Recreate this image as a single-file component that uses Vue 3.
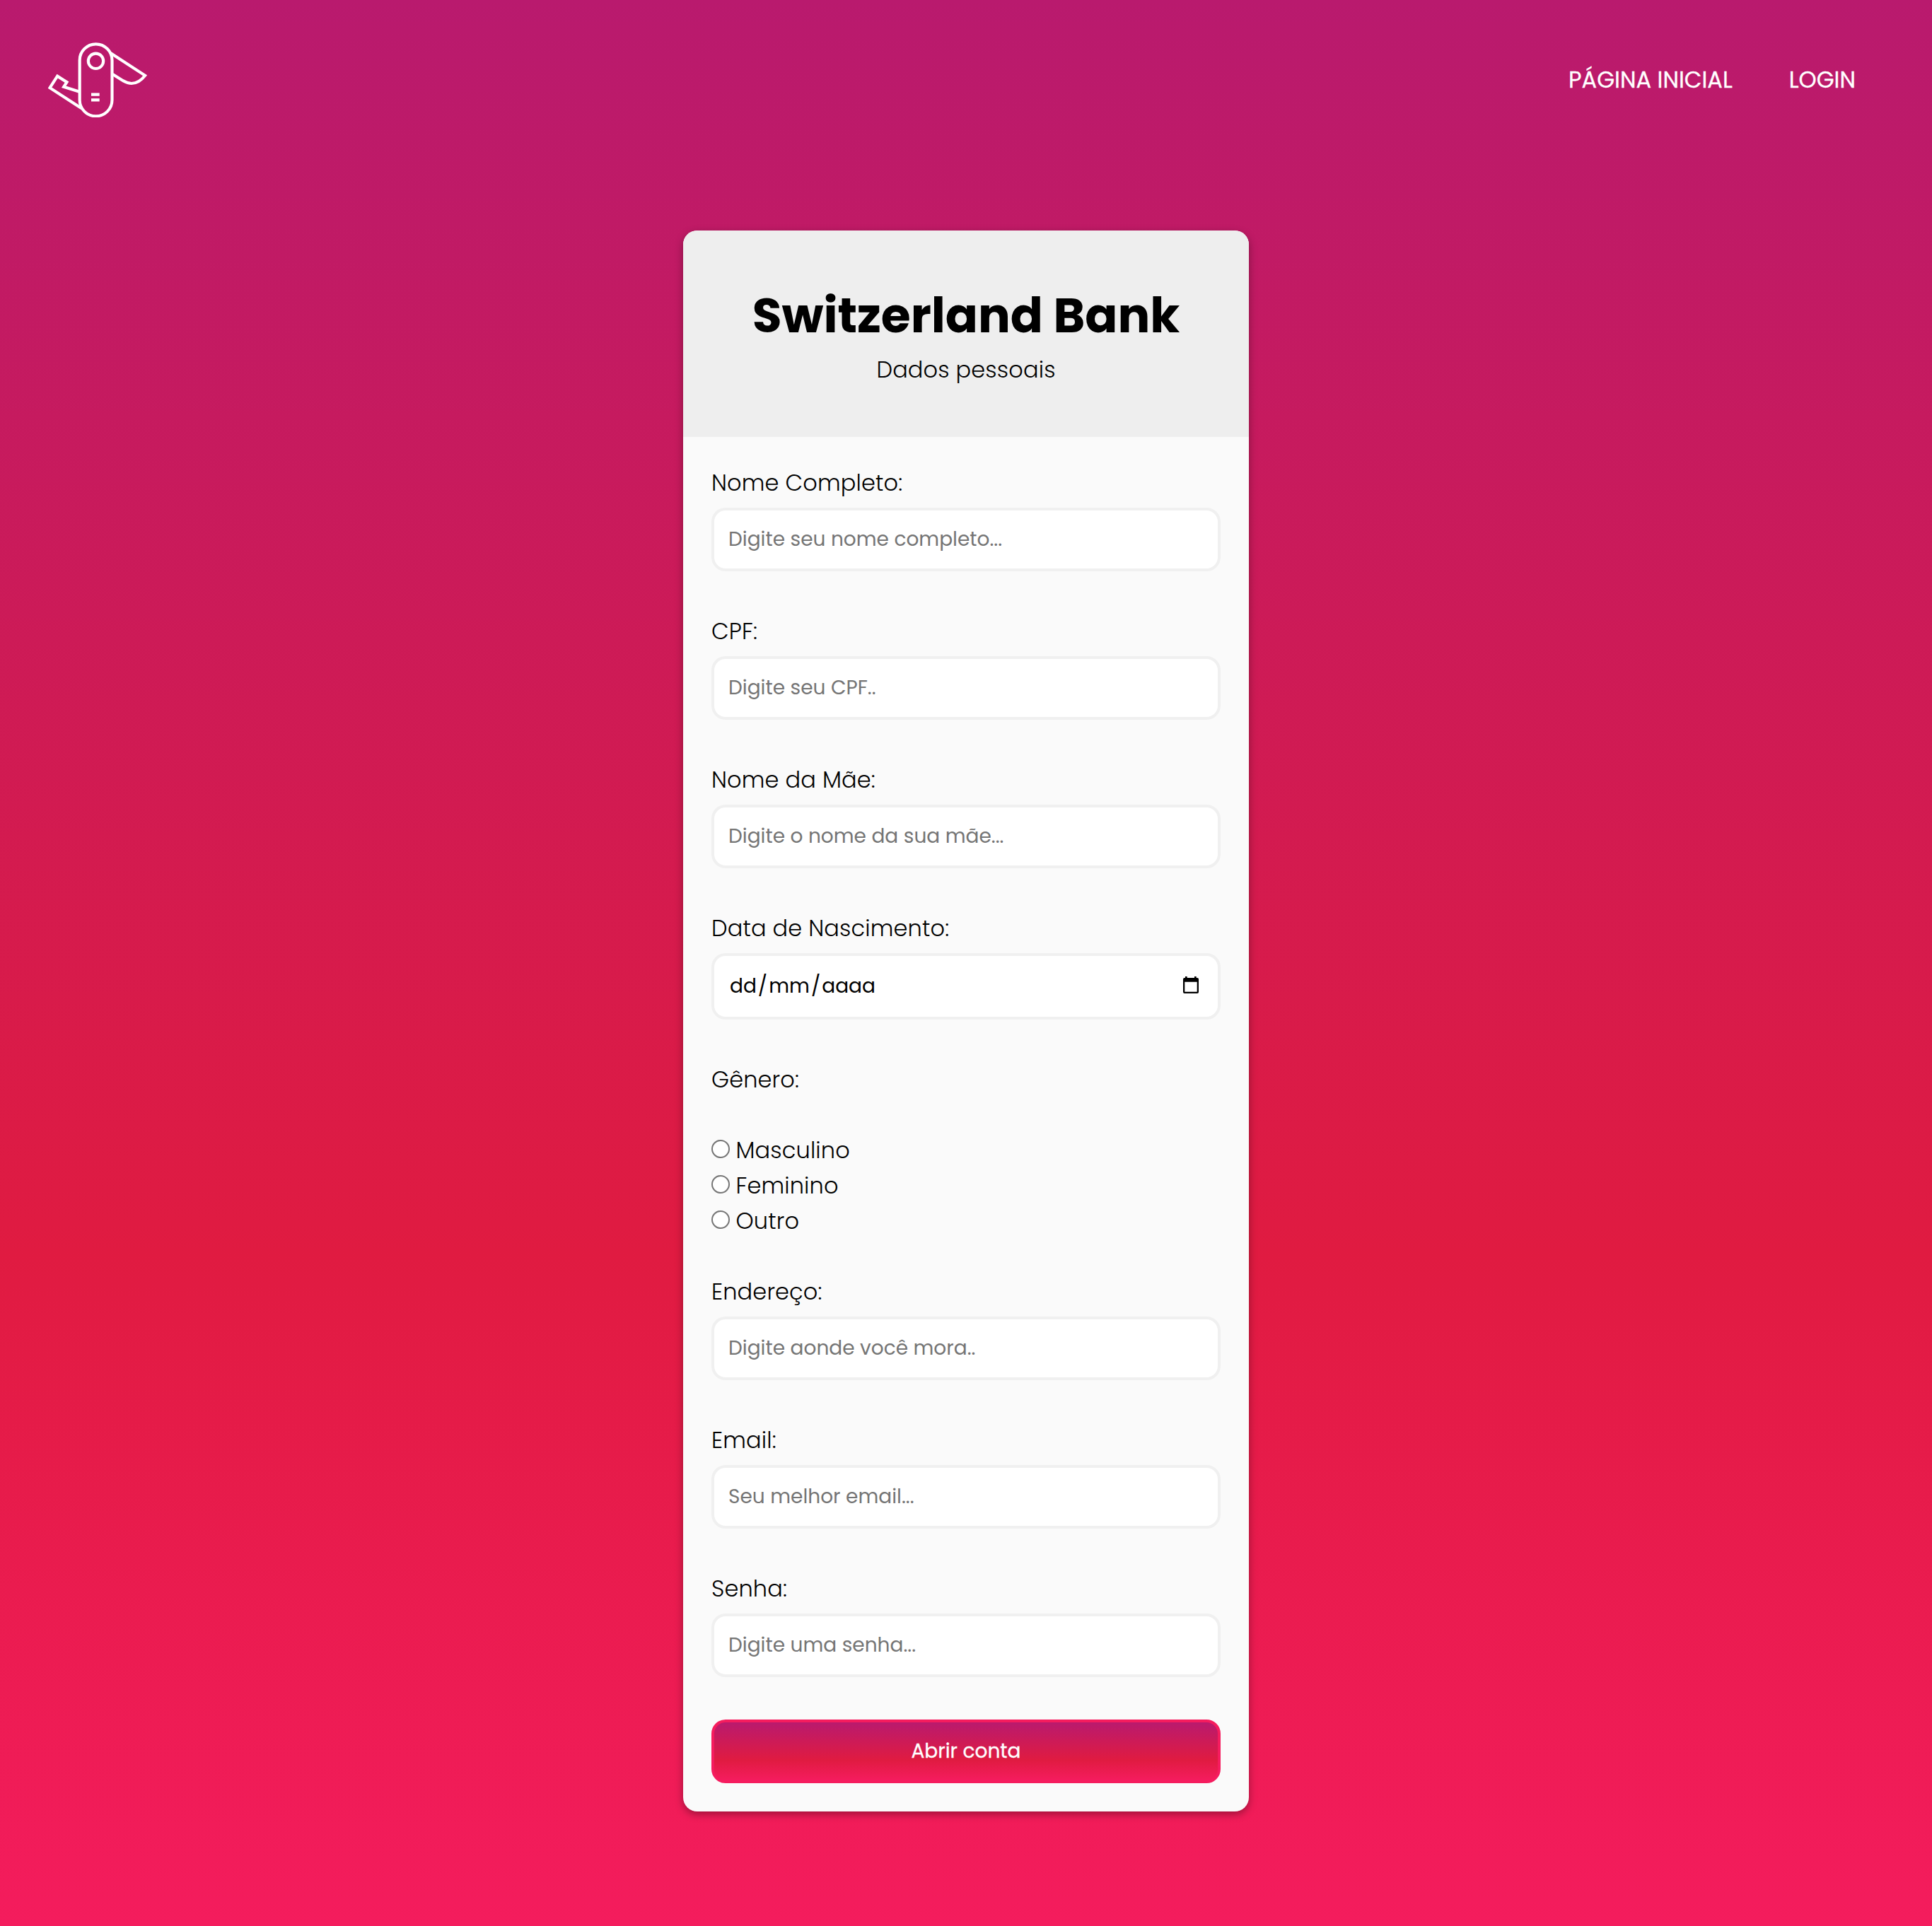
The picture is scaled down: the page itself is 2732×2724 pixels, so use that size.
<script setup>
const personal = [
  { id: 'nome', label: 'Nome Completo:', type: 'text', hint: 'Digite seu nome completo...' },
  { id: 'cpf', label: 'CPF:', type: 'text', hint: 'Digite seu CPF..' },
  { id: 'mae', label: 'Nome da Mãe:', type: 'text', hint: 'Digite o nome da sua mãe...' },
]
const genders = [
  { value: 'm', label: 'Masculino' },
  { value: 'f', label: 'Feminino' },
  { value: 'o', label: 'Outro' },
]
const account = [
  { id: 'endereco', label: 'Endereço:', type: 'text', hint: 'Digite aonde você mora..' },
  { id: 'email', label: 'Email:', type: 'email', hint: 'Seu melhor email...' },
  { id: 'senha', label: 'Senha:', type: 'password', hint: 'Digite uma senha...' },
]
</script>

<template>
  <div class="page">
    <header class="topbar">
      <svg class="logo" viewBox="54 59 420 320" fill="none" stroke="#fff" stroke-width="12.500">
        <rect x="188" y="66" width="137.500" height="306" rx="68.700" />
        <circle cx="256.500" cy="138" r="32" />
        <path d="M237 280h35M237 303h35" />
        <path d="M187 268.500L120.500 247.500L133.500 227.500L93.500 202L61.500 251.500L196 339" />
        <path d="M319 104L465.500 199.500C446 225 428 233 408 233C392 233 380 226 371 221L328 194" />
      </svg>
      <nav class="nav">
        <a>PÁGINA INICIAL</a>
        <a>LOGIN</a>
      </nav>
    </header>

    <main class="card">
      <div class="card-head">
        <h1>Switzerland Bank</h1>
        <p>Dados pessoais</p>
      </div>
      <form class="form">
        <div v-for="f in personal" :key="f.id" class="field">
          <label class="label" :for="f.id">{{ f.label }}</label>
          <input :id="f.id" class="box" :type="f.type" :placeholder="f.hint" />
        </div>

        <div class="field">
          <span class="label">Data de Nascimento:</span>
          <div class="box date">
            <div class="parts">
              <span class="part">dd</span><span>/</span><span class="part">mm</span><span>/</span><span class="part">aaaa</span>
            </div>
            <svg class="cal" viewBox="0 0 22 24">
              <path fill="#000" fill-rule="evenodd" d="M3 0h2.700v2H16V0h2.700v2H20a2 2 0 0 1 2 2V22a2 2 0 0 1-2 2H2a2 2 0 0 1-2-2V4a2 2 0 0 1 2-2H3zM2.300 7.700V21.700H19.700V7.700z" />
            </svg>
          </div>
        </div>

        <div class="genders">
          <span class="label">Gênero:</span>
          <div class="options">
            <label v-for="g in genders" :key="g.value" class="option">
              <input class="radio" type="radio" name="genero" :value="g.value" />
              <span class="label">{{ g.label }}</span>
            </label>
          </div>
        </div>

        <div v-for="f in account" :key="f.id" class="field">
          <label class="label" :for="f.id">{{ f.label }}</label>
          <input :id="f.id" class="box" :type="f.type" :placeholder="f.hint" />
        </div>

        <button class="submit" type="button">Abrir conta</button>
      </form>
    </main>
  </div>
</template>

<style>
body {
  margin: 0;
}
</style>

<style scoped>
* {
  box-sizing: border-box;
  margin: 0;
}
.page {
  min-height: 2724px;
  background: linear-gradient(to bottom, #b91a6e, #e01b41 65%, #f41c5d);
  font-family: Poppins, Inter, sans-serif;
  color: #000;
}
.topbar {
  height: 226px;
  padding: 0 108px 0 68px;
  display: flex;
  align-items: center;
  justify-content: space-between;
}
.logo {
  width: 140px;
  height: 106.67px;
}
.nav {
  display: flex;
  gap: 80px;
  font-size: 32px;
  color: #fff;
  -webkit-text-stroke: 0.3px #fff;
}
.card {
  width: 800px;
  margin: 100px auto 0;
  border-radius: 20px;
  overflow: hidden;
  background: #fafafa;
  box-shadow: 0 4px 12px rgba(0, 0, 0, 0.35);
}
.card-head {
  height: 292px;
  padding-top: 70px;
  background: #eee;
  text-align: center;
}
h1 {
  font-size: 68px;
  line-height: 102px;
  font-weight: 700;
}
.card-head p {
  font-size: 32px;
  line-height: 50px;
  font-weight: 300;
  letter-spacing: 0.13px;
}
.form {
  padding: 40px;
  display: flex;
  flex-direction: column;
  gap: 60px;
}
.field {
  display: flex;
  flex-direction: column;
  gap: 10px;
}
.label {
  display: block;
  font-size: 32px;
  line-height: 50px;
  font-weight: 300;
  letter-spacing: 0.13px;
}
.box {
  width: 720px;
  height: 90px;
  padding: 0 20px;
  border: 4px solid #f0f0f0;
  border-radius: 20px;
  background: #fff;
  font-family: inherit;
  font-size: 28px;
}
.box::placeholder {
  color: #757575;
}
.date {
  height: 94px;
  padding: 0 27px 0 20px;
  display: flex;
  align-items: center;
  justify-content: space-between;
}
.parts {
  display: flex;
}
.part {
  padding: 0 2px;
}
.cal {
  width: 22px;
  height: 24px;
  margin-bottom: 4px;
}
.options {
  margin-top: 50px;
}
.genders {
  margin-bottom: -10px;
}
.option {
  display: flex;
  height: 50px;
}
.radio {
  appearance: none;
  width: 26px;
  height: 26px;
  margin: 10px 8.500px 0 0;
  border: 2px solid #767676;
  border-radius: 50%;
  background: #fff;
}
.submit {
  height: 90px;
  border: 4px solid #f51c5e;
  border-radius: 20px;
  background: linear-gradient(to bottom, #b91a6e, #e01b41 65%, #f51c5e);
  color: #fff;
  font-family: inherit;
  font-size: 28px;
  -webkit-text-stroke: 0.3px #fff;
}
</style>
